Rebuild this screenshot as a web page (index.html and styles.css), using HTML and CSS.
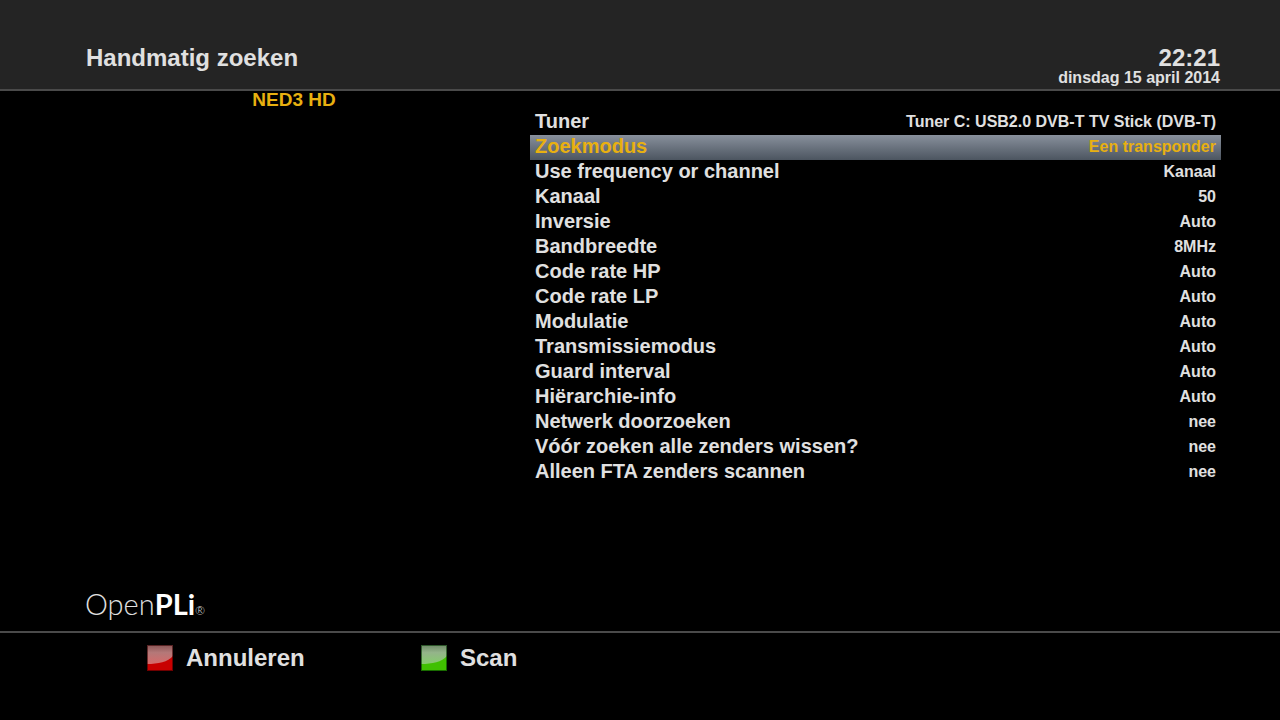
FILE: index.html
```html
<!DOCTYPE html>
<html lang="nl">
<head>
    <meta charset="UTF-8">
    <meta name="viewport" content="width=device-width, initial-scale=1.0">
    <title>Handmatig zoeken</title>
    <link rel="stylesheet" href="styles.css">
</head>
<body>
    <header class="topbar">
        <h1>Handmatig zoeken</h1>
        <div class="clock">
            <div class="time">22:21</div>
            <div class="date">dinsdag 15 april 2014</div>
        </div>
    </header>

    <main class="content">
        <div class="channel">NED3 HD</div>
        <table class="settings">
            <tbody>
                <tr><th scope="row">Tuner</th><td>Tuner C: USB2.0 DVB-T TV Stick (DVB-T)</td></tr>
                <tr class="selected"><th scope="row">Zoekmodus</th><td>Een transponder</td></tr>
                <tr><th scope="row">Use frequency or channel</th><td>Kanaal</td></tr>
                <tr><th scope="row">Kanaal</th><td>50</td></tr>
                <tr><th scope="row">Inversie</th><td>Auto</td></tr>
                <tr><th scope="row">Bandbreedte</th><td>8MHz</td></tr>
                <tr><th scope="row">Code rate HP</th><td>Auto</td></tr>
                <tr><th scope="row">Code rate LP</th><td>Auto</td></tr>
                <tr><th scope="row">Modulatie</th><td>Auto</td></tr>
                <tr><th scope="row">Transmissiemodus</th><td>Auto</td></tr>
                <tr><th scope="row">Guard interval</th><td>Auto</td></tr>
                <tr><th scope="row">Hiërarchie-info</th><td>Auto</td></tr>
                <tr><th scope="row">Netwerk doorzoeken</th><td>nee</td></tr>
                <tr><th scope="row">Vóór zoeken alle zenders wissen?</th><td>nee</td></tr>
                <tr><th scope="row">Alleen FTA zenders scannen</th><td>nee</td></tr>
            </tbody>
        </table>
    </main>

    <div class="logo">Open<b>PLi</b><small>®</small></div>

    <footer class="keys">
        <button type="button">
            <svg class="key" viewBox="0 0 26 26" aria-hidden="true">
                <defs>
                    <linearGradient id="redGloss" x1="0" y1="0" x2="0" y2="1">
                        <stop offset="0" stop-color="#8a5656"/>
                        <stop offset="0.4" stop-color="#b47878"/>
                        <stop offset="1" stop-color="#d66a6a"/>
                    </linearGradient>
                </defs>
                <rect width="26" height="26" fill="#c80000"/>
                <path d="M0 0H26V11C21 17 11 19 0 19Z" fill="url(#redGloss)"/>
                <rect x="0.5" y="0.5" width="25" height="25" fill="none" stroke="#300" stroke-opacity="0.6"/>
            </svg>
            Annuleren
        </button>
        <button type="button">
            <svg class="key" viewBox="0 0 26 26" aria-hidden="true">
                <defs>
                    <linearGradient id="greenGloss" x1="0" y1="0" x2="0" y2="1">
                        <stop offset="0" stop-color="#6f8a68"/>
                        <stop offset="0.4" stop-color="#94b48a"/>
                        <stop offset="1" stop-color="#86cc6c"/>
                    </linearGradient>
                </defs>
                <rect width="26" height="26" fill="#40c000"/>
                <path d="M0 0H26V11C21 17 11 19 0 19Z" fill="url(#greenGloss)"/>
                <rect x="0.5" y="0.5" width="25" height="25" fill="none" stroke="#030" stroke-opacity="0.6"/>
            </svg>
            Scan
        </button>
    </footer>
</body>
</html>
```
FILE: styles.css
```css
* {
    box-sizing: border-box;
}
body {
    margin: 0;
    min-height: 100vh;
    display: flex;
    flex-direction: column;
    background: #000;
    color: #e0e0e0;
    font-family: "Liberation Sans", Arial, sans-serif;
    font-weight: bold;
}
.topbar {
    display: flex;
    justify-content: space-between;
    padding: 45px 60px 4px 86px;
    background: #242424;
    border-bottom: 2px solid #4a4a4a;
}
h1 {
    margin: 0;
    font-size: 24px;
    line-height: 26px;
}
.clock {
    text-align: right;
}
.time {
    font-size: 24px;
    line-height: 26px;
}
.date {
    font-size: 16px;
    line-height: 14px;
}
.content {
    flex: 1;
    display: grid;
    grid-template-columns: 418fr 691fr;
    align-items: start;
    column-gap: 27px;
    padding: 0 59px 0 85px;
}
.channel {
    color: #e8b010;
    font-size: 19px;
    line-height: 18px;
    text-align: center;
}
.settings {
    width: 100%;
    margin-top: 19px;
    border-collapse: collapse;
}
.settings th,
.settings td {
    height: 25px;
    padding: 0 5px 2px;
    line-height: 23px;
}
.settings th {
    font-size: 20px;
    text-align: left;
}
.settings td {
    font-size: 16px;
    text-align: right;
}
.selected {
    background: linear-gradient(#88909c, #4c5560);
    color: #e8b010;
}
.logo {
    padding: 0 85px;
    font-family: Lato, sans-serif;
    font-size: 29px;
    font-weight: 300;
    line-height: 40px;
}
.logo b {
    color: #fff;
    font-weight: 700;
}
.logo small {
    font-size: 12px;
}
.keys {
    display: flex;
    padding: 11px 147px 48px;
    border-top: 2px solid #4a4a4a;
}
.keys button {
    display: flex;
    align-items: center;
    gap: 13px;
    width: 274px;
    padding: 0;
    border: none;
    background: none;
    color: inherit;
    font: inherit;
    font-size: 24px;
    line-height: 28px;
    cursor: pointer;
}
.key {
    width: 26px;
    height: 26px;
}
```
